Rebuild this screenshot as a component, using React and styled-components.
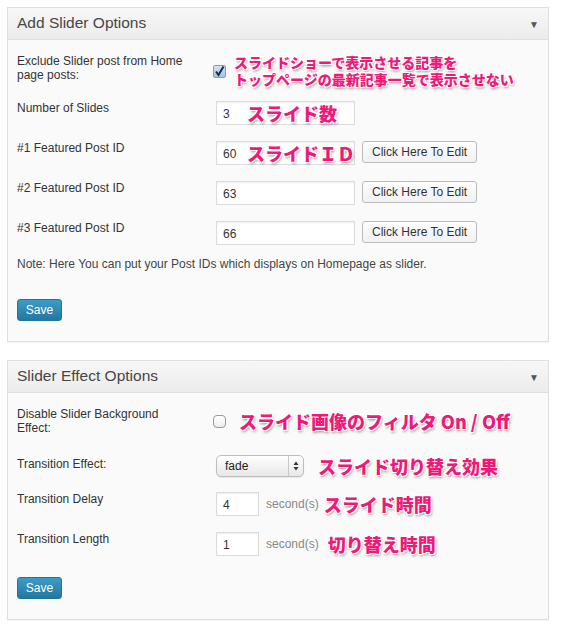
import React from "react";
import styled, { createGlobalStyle } from "styled-components";

const GlobalStyle = createGlobalStyle`
    body {
        margin: 0;
        background: #ffffff;
        font-family: "Liberation Sans", Arial, sans-serif;
    }
`;

const Page = styled.div`
    padding: 7px 12px 10px 7px;
    display: flex;
    flex-direction: column;
    gap: 18px;
`;

const Panel = styled.section`
    border: 1px solid #dfdfdf;
    background: #fafafa;
    box-shadow: 0 1px 1px rgba(0, 0, 0, 0.04);
`;

const PanelHeader = styled.header`
    height: 32px;
    display: flex;
    align-items: center;
    justify-content: space-between;
    padding: 0 9px 2px 9px;
    box-sizing: border-box;
    background: linear-gradient(#f7f7f7, #ececec);
    border-bottom: 1px solid #dfdfdf;
    h3 {
        margin: 0;
        font-size: 15.5px;
        font-weight: normal;
        color: #464646;
    }
    .arrow {
        font-size: 10px;
        color: #555;
        padding-top: 3px;
    }
`;

const PanelBody = styled.div`
    padding: ${(p) => p.$top}px 9px 20px 9px;
`;

const Row = styled.div`
    display: flex;
    align-items: flex-start;
    margin-bottom: ${(p) => p.$gap ?? 16}px;
`;

const Label = styled.div`
    width: 199px;
    flex-shrink: 0;
    font-size: 12px;
    line-height: 14px;
    color: #333;
    padding-top: ${(p) => p.$pad ?? 0}px;
`;

const Field = styled.div`
    position: relative;
    display: flex;
    align-items: center;
    align-self: ${(p) => (p.$center ? "center" : "flex-start")};
    gap: 7px;
`;

const TextInput = styled.div`
    width: ${(p) => p.$w}px;
    height: 24px;
    box-sizing: border-box;
    border: 1px solid #dcdcdc;
    background: #fff;
    box-shadow: inset 0 1px 2px rgba(0, 0, 0, 0.07);
    font-size: 12px;
    color: #333;
    display: flex;
    align-items: center;
    padding: 2px 6px 0;
`;

const Button = styled.button`
    height: 22px;
    padding: 0 9px;
    border: 1px solid #bbb;
    border-radius: 3px;
    background: linear-gradient(#fefefe, #f1f1f1);
    font-family: inherit;
    font-size: 12px;
    color: #333;
    margin-bottom: 2px;
`;

const SaveButton = styled.button`
    display: block;
    height: 22px;
    width: 45px;
    border: 1px solid #21759b;
    border-radius: 3px;
    background: linear-gradient(#3c9cc8, #23789f);
    font-family: inherit;
    font-size: 12px;
    color: #fff;
    padding: 0;
    margin-top: ${(p) => p.$top}px;
`;

const Check = styled.span`
    width: 13px;
    height: 13px;
    box-sizing: border-box;
    margin-left: -3px;
    border: 1px solid #999;
    border-radius: ${(p) => (p.$checked ? 2 : 4)}px;
    background: ${(p) =>
        p.$checked ? "linear-gradient(#cfe4f7, #9ec4ea)" : "linear-gradient(#fff, #eee)"};
    display: flex;
    align-items: center;
    justify-content: center;
`;

const Select = styled.div`
    width: 88px;
    height: 22px;
    box-sizing: border-box;
    border: 1px solid #bdbdbd;
    border-radius: 5px;
    background: linear-gradient(#fff, #e7e7e7);
    box-shadow: 0 1px 1px rgba(0, 0, 0, 0.08);
    display: flex;
    align-items: center;
    font-size: 12px;
    color: #222;
    span {
        flex: 1;
        padding-left: 8px;
    }
    i {
        width: 14px;
        height: 100%;
        border-left: 1px solid #c8c8c8;
        display: flex;
        align-items: center;
        justify-content: center;
    }
`;

const Unit = styled.span`
    font-size: 12px;
    color: #888;
`;

const Note = styled.p`
    margin: 0;
    font-size: 12px;
    line-height: 15px;
    color: #444;
`;

const Memo = styled.span`
    font-family: "Noto Sans CJK JP", sans-serif;
    font-weight: 900;
    font-size: ${(p) => p.$size ?? 18}px;
    line-height: ${(p) => (p.$size ? p.$size + 3 : 20)}px;
    color: #ee1a78;
    white-space: nowrap;
    text-shadow: -1px -1px 0 #fff, 1px -1px 0 #fff, -1px 1px 0 #fff, 1px 1px 0 #fff,
        1px 2px 3px rgba(0, 0, 0, 0.45);
    margin-left: ${(p) => p.$ml ?? 0}px;
`;

const OverMemo = styled(Memo)`
    position: absolute;
    left: ${(p) => p.$left}px;
    top: 50%;
    transform: translateY(-52%);
`;

const CheckMark = () => (
    <svg width="11" height="11" viewBox="0 0 11 11">
        <path d="M2 5.5 L4.5 9 L9.5 0.5" fill="none" stroke="#1d2a3a" strokeWidth="2" />
    </svg>
);

const Arrows = () => (
    <svg width="6" height="10" viewBox="0 0 6 10">
        <path d="M3 0.5 L5.5 4 L0.5 4 Z M3 9.5 L5.5 6 L0.5 6 Z" fill="#333" />
    </svg>
);

const posts = [
    { n: 1, id: "60", memo: "スライドＩＤ" },
    { n: 2, id: "63" },
    { n: 3, id: "66" },
];

const App = () => {
    return (
        <Page>
            <GlobalStyle />
            <Panel>
                <PanelHeader>
                    <h3>Add Slider Options</h3>
                    <span className="arrow">▼</span>
                </PanelHeader>
                <PanelBody $top={14}>
                    <Row $gap={13}>
                        <Label>
                            Exclude Slider post from Home
                            <br />
                            page posts:
                        </Label>
                        <Field $center>
                            <Check $checked>
                                <CheckMark />
                            </Check>
                            <Memo $size={14} $ml={1}>
                                スライドショーで表示させる記事を
                                <br />
                                トップページの最新記事一覧で表示させない
                            </Memo>
                        </Field>
                    </Row>
                    <Row>
                        <Label>Number of Slides</Label>
                        <Field>
                            <TextInput $w={139}>3</TextInput>
                            <OverMemo $left={31}>スライド数</OverMemo>
                        </Field>
                    </Row>
                    {posts.map((p) => (
                        <Row key={p.n} $gap={p.n === 3 ? 12 : 16}>
                            <Label>#{p.n} Featured Post ID</Label>
                            <Field>
                                <TextInput $w={139}>{p.id}</TextInput>
                                <Button>Click Here To Edit</Button>
                                {p.memo && <OverMemo $left={31}>{p.memo}</OverMemo>}
                            </Field>
                        </Row>
                    ))}
                    <Note>Note: Here You can put your Post IDs which displays on Homepage as slider.</Note>
                    <SaveButton $top={27}>Save</SaveButton>
                </PanelBody>
            </Panel>

            <Panel>
                <PanelHeader>
                    <h3>Slider Effect Options</h3>
                    <span className="arrow">▼</span>
                </PanelHeader>
                <PanelBody $top={14}>
                    <Row $gap={20}>
                        <Label>
                            Disable Slider Background
                            <br />
                            Effect:
                        </Label>
                        <Field $center>
                            <Check />
                            <Memo $ml={6}>スライド画像のフィルタ On / Off</Memo>
                        </Field>
                    </Row>
                    <Row $gap={15}>
                        <Label $pad={2}>Transition Effect:</Label>
                        <Field>
                            <Select>
                                <span>fade</span>
                                <i>
                                    <Arrows />
                                </i>
                            </Select>
                            <Memo $ml={7}>スライド切り替え効果</Memo>
                        </Field>
                    </Row>
                    <Row>
                        <Label>Transition Delay</Label>
                        <Field>
                            <TextInput $w={43}>4</TextInput>
                            <Unit>second(s)</Unit>
                            <Memo $ml={-2}>スライド時間</Memo>
                        </Field>
                    </Row>
                    <Row $gap={0}>
                        <Label>Transition Length</Label>
                        <Field>
                            <TextInput $w={43}>1</TextInput>
                            <Unit>second(s)</Unit>
                            <Memo $ml={2}>切り替え時間</Memo>
                        </Field>
                    </Row>
                    <SaveButton $top={21}>Save</SaveButton>
                </PanelBody>
            </Panel>
        </Page>
    );
};

export default App;
